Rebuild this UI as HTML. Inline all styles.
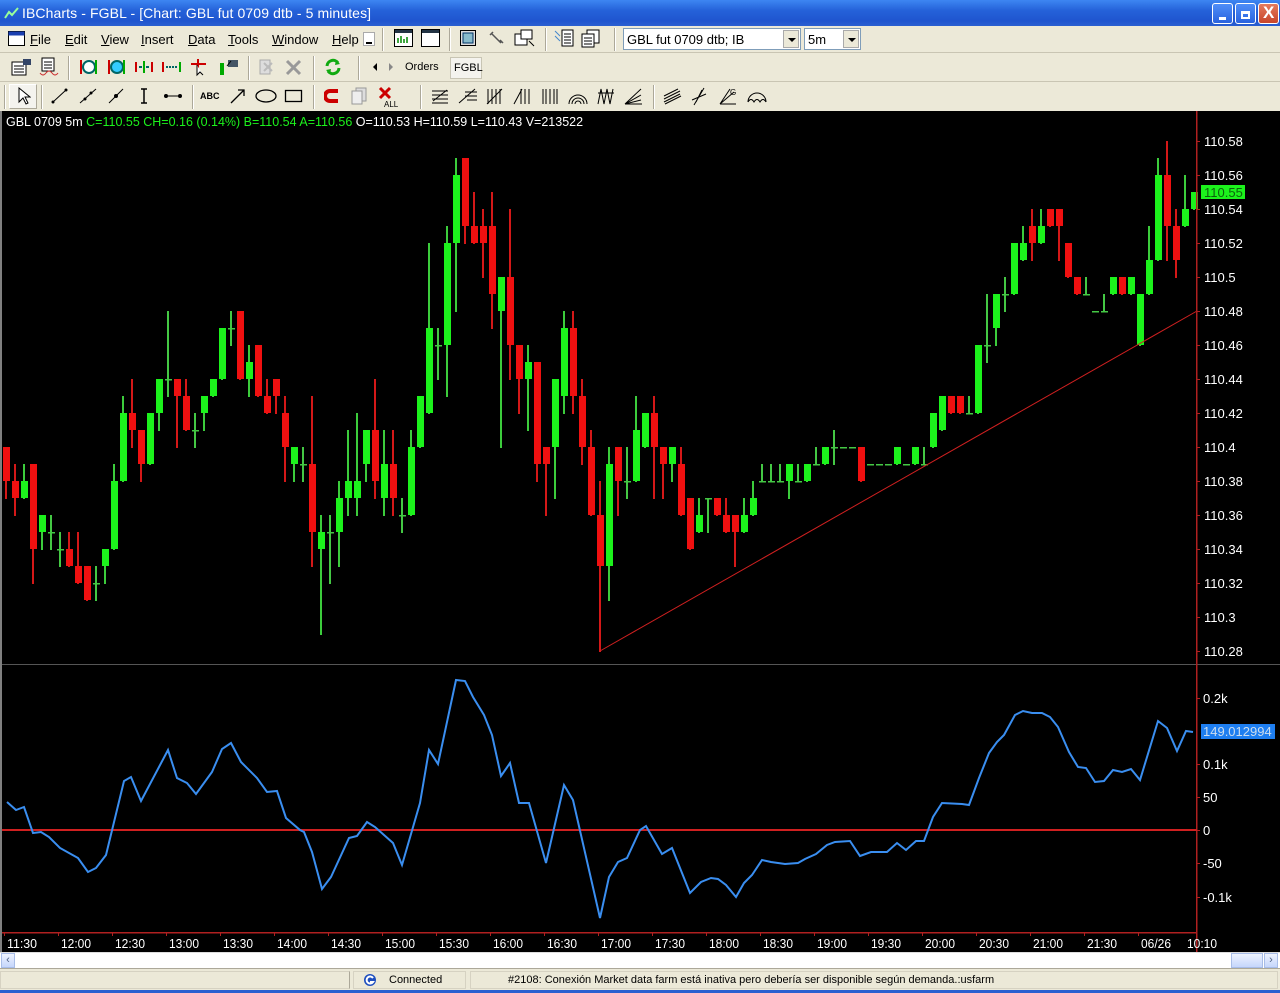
<!DOCTYPE html>
<html><head><meta charset="utf-8">
<style>
*{margin:0;padding:0;box-sizing:border-box}
body{width:1280px;height:993px;overflow:hidden;background:#ece9d8;font-family:"Liberation Sans",sans-serif;font-size:12px;position:relative}
.abs{position:absolute}
#title{left:0;top:0;width:1280px;height:26px;background:linear-gradient(#3d86f2,#2562d9 40%,#1f55cf 80%,#2a5fd0);}
#title span{position:absolute;left:22px;top:5px;color:#fff;font-size:14px;letter-spacing:0.1px}
.wb{position:absolute;top:3px;width:21px;height:21px;border:1px solid #fff;border-radius:3px;background:linear-gradient(#4f8ef8,#2a63de)}
.bar{left:0;width:1280px;background:#ece9d8;border-bottom:1px solid #c9c5b3}
.m{position:absolute;top:32px;font-size:13px;color:#000}
.m u{text-decoration:underline}
.sep{position:absolute;width:2px;border-left:1px solid #aca899;border-right:1px solid #fff}
.ic{position:absolute}
#chart{left:2px;top:111px;width:1278px;height:841px;background:#000}
</style></head><body>
<div id="title" class="abs">
<svg class="abs" style="left:4px;top:6px" width="16" height="14"><polyline points="1,12 5,6 8,9 14,2" fill="none" stroke="#9f9" stroke-width="2"/></svg>
<span>IBCharts - FGBL - [Chart: GBL fut 0709 dtb - 5 minutes]</span>
<div class="wb" style="left:1212px"><div class="abs" style="left:6px;top:13px;width:7px;height:3px;background:#fff"></div></div>
<div class="wb" style="left:1235px"><div class="abs" style="left:5px;top:7px;width:9px;height:8px;border:2px solid #fff;border-top-width:3px"></div></div>
<div class="wb" style="left:1258px;background:linear-gradient(#e47a5c,#c8452a)"><span style="position:absolute;left:4px;top:-1px;color:#fff;font-size:17px;font-weight:bold">X</span></div>
</div>

<div class="abs bar" style="top:26px;height:27px"></div>
<svg class="ic" style="left:8px;top:31px" width="17" height="16"><rect x="0.5" y="0.5" width="16" height="14" fill="#fff" stroke="#000"/><rect x="0.5" y="0.5" width="16" height="4" fill="#1a3fb0"/></svg>
<div class="m" style="left:30px"><u>F</u>ile</div>
<div class="m" style="left:65px"><u>E</u>dit</div>
<div class="m" style="left:101px"><u>V</u>iew</div>
<div class="m" style="left:141px"><u>I</u>nsert</div>
<div class="m" style="left:188px"><u>D</u>ata</div>
<div class="m" style="left:228px"><u>T</u>ools</div>
<div class="m" style="left:272px"><u>W</u>indow</div>
<div class="m" style="left:332px"><u>H</u>elp</div>
<div class="abs" style="left:363px;top:32px;width:12px;height:14px;border:1px solid #aaa;background:#fff"><div class="abs" style="left:2px;top:9px;width:6px;height:2px;background:#000"></div></div>
<div class="sep" style="left:382px;top:28px;height:23px"></div>
<svg class="ic" style="left:394px;top:29px" width="20" height="19"><rect x="0.5" y="0.5" width="18" height="17" fill="#fff" stroke="#000"/><rect x="1" y="1" width="17" height="3" fill="#234"/><path d="M4 14v-5M7 14v-7M10 14v-4M13 14v-6" stroke="#080" stroke-width="1.5"/></svg>
<svg class="ic" style="left:421px;top:29px" width="20" height="19"><rect x="0.5" y="0.5" width="18" height="17" fill="#fff" stroke="#000"/><rect x="1" y="1" width="17" height="3" fill="#234"/></svg>
<div class="sep" style="left:449px;top:28px;height:23px"></div>
<svg class="ic" style="left:460px;top:30px" width="17" height="17"><rect x="0.5" y="0.5" width="15" height="15" fill="#ddd" stroke="#000"/><rect x="3" y="3" width="10" height="10" fill="#8bc" stroke="#036"/></svg>
<svg class="ic" style="left:488px;top:30px" width="17" height="17"><path d="M3 3l10 10M5 2l-3 3M12 10l3 3" stroke="#555" stroke-width="1.5" fill="none"/></svg>
<svg class="ic" style="left:514px;top:29px" width="22" height="19"><rect x="1" y="5" width="12" height="11" fill="#fff" stroke="#000"/><rect x="7" y="1" width="11" height="9" fill="#fff" stroke="#000"/><path d="M15 12l5 5" stroke="#000"/></svg>
<div class="sep" style="left:545px;top:28px;height:23px"></div>
<svg class="ic" style="left:553px;top:29px" width="22" height="19"><path d="M2 2l5 5M2 7l5 5" stroke="#48c"/><rect x="9" y="1" width="11" height="16" fill="#fff" stroke="#000"/><path d="M11 5h7M11 8h7M11 11h7M11 14h7" stroke="#000"/></svg>
<svg class="ic" style="left:581px;top:29px" width="20" height="19"><rect x="6" y="1" width="12" height="13" fill="#fff" stroke="#000"/><rect x="1" y="5" width="12" height="13" fill="#fff" stroke="#000"/><path d="M3 9h8M3 12h8M3 15h8" stroke="#000"/></svg>
<div class="sep" style="left:614px;top:28px;height:23px"></div>
<div class="abs" style="left:623px;top:28px;width:178px;height:22px;background:#fff;border:1px solid #7f9db9"><span class="abs" style="left:3px;top:3px;font-size:13px">GBL fut 0709 dtb; IB</span>
<div class="abs" style="right:1px;top:1px;width:16px;height:18px;background:#ece9d8;border:1px solid #aaa"><div class="abs" style="left:4px;top:7px;border-left:4px solid transparent;border-right:4px solid transparent;border-top:4px solid #000"></div></div></div>
<div class="abs" style="left:804px;top:28px;width:57px;height:22px;background:#fff;border:1px solid #7f9db9"><span class="abs" style="left:3px;top:3px;font-size:13px">5m</span>
<div class="abs" style="right:1px;top:1px;width:16px;height:18px;background:#ece9d8;border:1px solid #aaa"><div class="abs" style="left:4px;top:7px;border-left:4px solid transparent;border-right:4px solid transparent;border-top:4px solid #000"></div></div></div>

<div class="abs bar" style="top:53px;height:29px"></div>
<svg class="ic" style="left:11px;top:57px" width="22" height="20"><rect x="1" y="5" width="14" height="13" fill="#fff" stroke="#000"/><path d="M3 9h10M3 12h10M3 15h10" stroke="#000"/><path d="M12 2h8v6h-8z" fill="#346"/></svg>
<svg class="ic" style="left:38px;top:57px" width="22" height="22"><rect x="4" y="1" width="12" height="13" fill="#fff" stroke="#000"/><path d="M6 5h8M6 8h8M6 11h8" stroke="#000"/><path d="M2 16q3 4 6 0t6 0 6 0" stroke="#c33" fill="none"/></svg>
<div class="sep" style="left:68px;top:56px;height:24px"></div>
<svg class="ic" style="left:78px;top:58px" width="20" height="18"><circle cx="11" cy="9" r="6" fill="#fff" stroke="#066" stroke-width="2"/><path d="M3 2v14" stroke="#c00" stroke-width="2"/><path d="M18 2v14" stroke="#0a0" stroke-width="2"/></svg>
<svg class="ic" style="left:106px;top:58px" width="20" height="18"><circle cx="11" cy="9" r="6" fill="#3cf" stroke="#066" stroke-width="2"/><path d="M3 2v14" stroke="#c00" stroke-width="2"/><path d="M18 2v14" stroke="#0a0" stroke-width="2"/></svg>
<svg class="ic" style="left:134px;top:58px" width="20" height="18"><path d="M2 4v10M18 4v10" stroke="#c00" stroke-width="2"/><path d="M5 9h3M12 9h3" stroke="#066" stroke-width="2"/><path d="M10 3v12" stroke="#0a0" stroke-width="2"/></svg>
<svg class="ic" style="left:161px;top:58px" width="22" height="18"><path d="M2 4v10" stroke="#c00" stroke-width="2"/><path d="M19 4v10" stroke="#0a0" stroke-width="2"/><path d="M5 9h12" stroke="#066" stroke-width="2" stroke-dasharray="2 1"/></svg>
<svg class="ic" style="left:189px;top:57px" width="20" height="20"><path d="M2 7h15M9 2v9" stroke="#c00" stroke-width="2"/><path d="M8 8l0 10 3-3 3 3" stroke="#000" fill="#fff"/></svg>
<svg class="ic" style="left:217px;top:57px" width="24" height="20"><path d="M5 6v12" stroke="#0a0" stroke-width="4"/><path d="M11 3h10v7h-10z" fill="#456"/><path d="M10 9l4-5" stroke="#000"/></svg>
<div class="sep" style="left:248px;top:56px;height:24px"></div>
<svg class="ic" style="left:256px;top:57px" width="20" height="20"><path d="M4 3h10v14h-10z" fill="#ddd" stroke="#aaa"/><path d="M8 6l8 8M16 6l-8 8" stroke="#bbb" stroke-width="2"/></svg>
<svg class="ic" style="left:285px;top:59px" width="18" height="18"><path d="M2 2l13 13M15 2l-13 13" stroke="#999" stroke-width="3"/></svg>
<div class="sep" style="left:313px;top:56px;height:24px"></div>
<svg class="ic" style="left:324px;top:58px" width="18" height="18"><path d="M3 8a6 6 0 0 1 11-3M15 10a6 6 0 0 1-11 3" stroke="#1a1" stroke-width="3" fill="none"/><path d="M12 2l4 4-5 1zM6 16l-4-4 5-1z" fill="#1a1"/></svg>
<div class="sep" style="left:358px;top:56px;height:24px"></div>
<div class="abs" style="left:373px;top:63px;border-top:4px solid transparent;border-bottom:4px solid transparent;border-right:4px solid #000"></div>
<div class="abs" style="left:389px;top:63px;border-top:4px solid transparent;border-bottom:4px solid transparent;border-left:4px solid #888"></div>
<div class="abs" style="left:405px;top:61px;font-size:11px">Orders</div>
<div class="abs" style="left:450px;top:57px;width:32px;height:22px;background:#f4f3ee;border:1px solid #c8c5b4"><span class="abs" style="left:3px;top:4px;font-size:11px">FGBL</span></div>

<div class="abs bar" style="top:82px;height:29px;border-bottom:none"></div>
<div class="sep" style="left:4px;top:85px;height:24px"></div>
<div class="abs" style="left:9px;top:84px;width:28px;height:25px;border:1px solid #fff;border-right-color:#aca899;border-bottom-color:#aca899;background:#f4f3ee"></div>
<svg class="ic" style="left:17px;top:87px" width="14" height="19"><path d="M2 1v14l4-4 3 6 2-1-3-6h5z" fill="#fff" stroke="#000"/></svg>
<div class="sep" style="left:41px;top:85px;height:24px"></div>
<svg class="ic" style="left:50px;top:87px" width="20" height="18"><path d="M3 15L16 3" stroke="#000"/><circle cx="3" cy="15" r="1.5" fill="#000"/><circle cx="16" cy="3" r="1.5" fill="#000"/></svg>
<svg class="ic" style="left:78px;top:87px" width="20" height="18"><path d="M2 16L18 2" stroke="#000"/><circle cx="7" cy="12" r="1.5" fill="#000"/><circle cx="13" cy="6" r="1.5" fill="#000"/></svg>
<svg class="ic" style="left:106px;top:87px" width="20" height="18"><path d="M3 16L17 2" stroke="#000"/><circle cx="10" cy="9" r="2" fill="#000"/></svg>
<svg class="ic" style="left:138px;top:87px" width="12" height="18"><path d="M6 2v14M3 2h6M3 16h6" stroke="#000" stroke-width="1.5"/></svg>
<svg class="ic" style="left:163px;top:90px" width="20" height="12"><path d="M2 6h16" stroke="#000"/><circle cx="3" cy="6" r="2" fill="#000"/><circle cx="17" cy="6" r="2" fill="#000"/></svg>
<div class="sep" style="left:192px;top:85px;height:24px"></div>
<div class="abs" style="left:200px;top:91px;font-size:9px;font-weight:bold">ABC</div>
<svg class="ic" style="left:229px;top:87px" width="18" height="18"><path d="M2 16L15 3M9 3h6v6" stroke="#000" fill="none" stroke-width="1.3"/></svg>
<svg class="ic" style="left:254px;top:88px" width="24" height="16"><ellipse cx="12" cy="8" rx="10" ry="6" fill="none" stroke="#000" stroke-width="1.3"/></svg>
<svg class="ic" style="left:284px;top:88px" width="20" height="16"><rect x="1.5" y="2.5" width="16" height="11" fill="none" stroke="#000" stroke-width="1.3"/></svg>
<div class="sep" style="left:313px;top:85px;height:24px"></div>
<svg class="ic" style="left:324px;top:88px" width="18" height="16"><path d="M14 3H6a5 5 0 0 0 0 10h8" stroke="#c00" stroke-width="4" fill="none"/></svg>
<svg class="ic" style="left:350px;top:86px" width="20" height="20"><rect x="6" y="2" width="10" height="13" fill="#ddd" stroke="#999"/><rect x="2" y="5" width="10" height="13" fill="#eee" stroke="#999"/></svg>
<svg class="ic" style="left:377px;top:86px" width="22" height="22"><path d="M3 2l10 10M13 2L3 12" stroke="#c00" stroke-width="3"/><text x="7" y="21" font-size="8" font-family="Liberation Sans">ALL</text></svg>
<div class="sep" style="left:420px;top:85px;height:24px"></div>
<svg class="ic" style="left:430px;top:87px" width="20" height="18"><path d="M2 4h16M2 8h16M2 12h16M2 16h16M3 14L17 3" stroke="#000"/></svg>
<svg class="ic" style="left:457px;top:87px" width="22" height="18"><path d="M2 16L18 2M8 5h12M8 9h12M10 13h10" stroke="#000"/></svg>
<svg class="ic" style="left:485px;top:87px" width="20" height="18"><path d="M3 2v15M7 2v15M11 2v15M15 2v15M2 17L17 2" stroke="#000"/></svg>
<svg class="ic" style="left:512px;top:87px" width="20" height="18"><path d="M9 2v15M13 2v15M17 2v15M2 17L10 2" stroke="#000"/></svg>
<svg class="ic" style="left:540px;top:87px" width="20" height="18"><path d="M3 2v15M6 2v15M10 2v15M14 2v15M17 2v15" stroke="#000"/></svg>
<svg class="ic" style="left:567px;top:87px" width="22" height="18"><path d="M2 17a9 9 0 0 1 18 0M5 17a6 6 0 0 1 12 0M8 17a3 3 0 0 1 6 0" stroke="#000" fill="none"/></svg>
<svg class="ic" style="left:596px;top:87px" width="20" height="18"><path d="M2 17L5 2 8 17 11 2 14 17 17 2M2 6h16" stroke="#000" fill="none"/></svg>
<svg class="ic" style="left:623px;top:87px" width="22" height="18"><path d="M2 17L18 2M2 17L18 8M2 17L18 13M2 17h17" stroke="#000" fill="none"/></svg>
<div class="sep" style="left:653px;top:85px;height:24px"></div>
<svg class="ic" style="left:662px;top:87px" width="22" height="18"><path d="M2 12L18 4M2 15L18 7M3 17L19 9M2 9L16 2" stroke="#000"/></svg>
<svg class="ic" style="left:690px;top:86px" width="20" height="20"><path d="M4 19L14 2M2 14l14-6M6 16L12 4" stroke="#000"/></svg>
<svg class="ic" style="left:718px;top:86px" width="22" height="20"><path d="M2 18L16 6M2 18L12 3M2 18h16" stroke="#000"/><text x="12" y="9" font-size="8" font-family="Liberation Sans">G</text></svg>
<svg class="ic" style="left:746px;top:87px" width="22" height="18"><path d="M2 15a9 9 0 0 1 18 0" stroke="#000" fill="none"/><path d="M2 15q3-5 6 0q3-5 6 0q3-5 6 0" stroke="#000" fill="none"/></svg>

<div id="chart" class="abs"></div>
<div class="abs" style="left:0;top:111px;width:2px;height:841px;background:#808080"></div>

<div class="abs" style="left:0;top:952px;width:1280px;height:16px;background:#fff;border-top:1px solid #ddd"></div>
<div class="abs" style="left:1px;top:953px;width:14px;height:15px;background:linear-gradient(#eef3fe,#c5d6fc);border:1px solid #a8bde8;color:#4d6185;font-size:11px;text-align:center;line-height:12px">‹</div>
<div class="abs" style="left:1231px;top:953px;width:32px;height:15px;background:linear-gradient(#eef3fe,#c5d6fc);border:1px solid #a8bde8"></div>
<div class="abs" style="left:1264px;top:953px;width:14px;height:15px;background:linear-gradient(#eef3fe,#c5d6fc);border:1px solid #a8bde8;color:#4d6185;font-size:11px;text-align:center;line-height:12px">›</div>

<div class="abs" style="left:0;top:968px;width:1280px;height:22px;background:#ece9d8;border-top:1px solid #aca899"></div>
<div class="abs" style="left:0;top:971px;width:350px;height:18px;border:1px solid #d6d2c2;border-right-color:#aca899"></div>
<div class="abs" style="left:353px;top:971px;width:113px;height:18px;border:1px solid #d6d2c2"></div>
<div class="abs" style="left:470px;top:971px;width:808px;height:18px;border:1px solid #d6d2c2"></div>
<svg class="ic" style="left:363px;top:973px" width="14" height="14"><circle cx="7" cy="7" r="6" fill="#1f4fbf"/><path d="M10 5a3.5 3.5 0 1 0 0 4H7" stroke="#fff" stroke-width="2" fill="none"/></svg>
<div class="abs" style="left:389px;top:974px;font-size:11px">Connected</div>
<div class="abs" style="left:508px;top:974px;font-size:11px">#2108: Conexión Market data farm está inativa pero debería ser disponible según demanda.:usfarm</div>
<div class="abs" style="left:0;top:990px;width:1280px;height:3px;background:#2a5fd0"></div>

<script>
var D=[[12,10,12,9],[10,9,11,8],[9,10,11,9],[11,6,11,4],[7,8,8,6],[7,7,8,6],[6,6,7,5],[6,5,7,5],[5,4,7,4],[5,3,5,3],[4,4,5,3],[5,6,6,4],[6,10,11,6],[10,14,15,10],[14,13,16,12],[13,11,13,10],[11,14,14,11],[14,16,16,13],[16,16,20,15],[16,15,16,12],[15,13,16,13],[13,13,14,12],[14,15,15,13],[15,16,16,15],[16,19,19,16],[19,19,20,18],[20,16,20,16],[16,17,18,15],[18,15,18,15],[15,14,16,14],[16,15,16,14],[14,12,15,10],[11,12,12,10],[11,11,12,10],
[11,7,15,5],[6,7,8,1],[7,7,8,4],[7,9,10,5],[9,10,13,8],[9,10,14,8],[11,13,13,10],[13,10,16,9],[9,11,13,8],[11,9,13,8],[8,8,9,7],[8,12,13,8],[12,15,15,12],[14,19,24,14],[18,18,19,16],[18,24,25,15],[24,28,29,20],[29,25,29,24],[25,24,27,24],[25,24,26,22],[25,21,27,19],[20,22,22,12],[22,18,26,16],[18,16,18,14],[16,17,18,13],[17,11,17,10],[12,11,12,8],[12,16,16,9],[15,19,20,14],[19,15,20,14],[15,12,16,11],[12,8,13,8],[8,5,10,0],
[5,11,12,3],[12,10,12,8],[10,10,12,9],[10,13,15,10],[12,14,14,12],[14,12,15,9],[12,11,12,9],[11,12,12,10],[11,8,12,8],[9,6,9,6],[7,8,9,7],[9,9,9,7],[9,8,9,8],[8,7,9,7],[8,7,8,5],[7,8,9,7],[8,9,10,8],[10,10,11,10],[10,10,11,10],[10,10,11,10],[10,11,11,9],[10,10,11,10],[10,11,11,10],[11,11,12,11],[11,12,12,11],[12,12,13,11],[12,12,12,12],[12,12,12,12],[12,10,12,10],[11,11,11,11],[11,11,11,11],[11,11,11,11],[11,12,12,11],[11,11,11,11],
[11,12,12,11],[11,11,12,11],[12,14,14,12],[13,15,15,13],[15,14,15,14],[15,14,15,14],[14,14,15,14],[14,18,18,14],[18,18,21,17],[19,21,21,18],[21,21,22,20],[21,24,24,21],[23,24,25,23],[25,24,26,23],[24,25,26,24],[26,25,26,25],[26,25,26,23],[24,22,24,22],[22,21,22,21],[21,21,22,21],[20,20,20,20],[20,20,21,20],[21,22,22,21],[22,21,22,21],[21,22,22,21],[18,21,21,18],[21,23,25,21],[23,28,29,23],[28,25,30,23],[25,23,26,22],[25,26,28,25],[26,27,27,26]];
var s='<svg width="1280" height="993" xmlns="http://www.w3.org/2000/svg" style="position:absolute;left:0;top:0" font-family="Liberation Sans, sans-serif">';
function Y(k){return 651-k*17}
for(var i=0;i<D.length;i++){var d=D[i],x=6+9*i,o=d[0],c=d[1],h=d[2],l=d[3];var up=c>=o;var col=(c>o)?'#1cf21c':(c<o?'#f01010':'#33d633');var wc=(c>o)?'#3ccc3c':(c<o?'#d41818':'#44c844');
if(h>l)s+='<rect x="'+(x-1)+'" y="'+Y(h)+'" width="2" height="'+((h-l)*17+1)+'" fill="'+wc+'"/>';
var t=Math.max(o,c),b=Math.min(o,c);
if(t>b)s+='<rect x="'+(x-3)+'" y="'+Y(t)+'" width="7" height="'+((t-b)*17)+'" fill="'+col+'"/>';
else s+='<rect x="'+(x-3)+'" y="'+Y(t)+'" width="7" height="1.5" fill="'+wc+'"/>';}
s+='<line x1="600" y1="651" x2="1197" y2="311" stroke="#d02020" stroke-width="1"/>';
s+='<rect x="2" y="664" width="1278" height="1" fill="#555"/>';
s+='<rect x="1196" y="111" width="1.5" height="841" fill="#b02020"/>';
var P=['110.58','110.56','110.54','110.52','110.5','110.48','110.46','110.44','110.42','110.4','110.38','110.36','110.34','110.32','110.3','110.28'];
for(var j=0;j<P.length;j++){var y=141+j*34;s+='<rect x="1197" y="'+y+'" width="3" height="1" fill="#b02020"/><text x="1204" y="'+(y+5)+'" fill="#fff" font-size="13">'+P[j]+'</text>';}
s+='<rect x="1201" y="185" width="44" height="14" fill="#1cf21c"/><text x="1204" y="197" fill="#000" font-size="13" opacity="0.6">110.55</text>';
s+='<text x="6" y="126" font-size="12.5" fill="#fff">GBL 0709 5m <tspan fill="#1cf21c">C=110.55  CH=0.16 (0.14%)  B=110.54  A=110.56</tspan>  O=110.53  H=110.59  L=110.43  V=213522</text>';
s+='<rect x="2" y="829" width="1195" height="2" fill="#d02020"/>';
var L=[[7,802],[16,810],[24,807],[33,833],[41,832],[49,837],[60,848],[78,858],[88,872],[96,868],[106,855],[124,781],[131,777],[141,801],[168,750],[177,778],[187,783],[196,794],[212,772],[222,749],[231,743],[241,762],[257,778],[267,792],[277,791],[286,818],[300,830],[304,832],[312,852],[322,889],[331,877],[349,838],[357,836],[367,822],[375,827],[384,835],[393,843],[402,865],[420,803],[429,750],[438,764],[456,680],[465,681],[473,697],[484,715],[492,735],[501,776],[510,763],[519,803],[529,803],[546,863],[564,785],[573,800],[600,918],[609,877],[618,862],[627,858],[640,830],[646,826],[662,854],[672,848],[690,893],[701,882],[711,878],[718,879],[726,885],[736,897],[744,883],[752,875],[762,860],[771,862],[785,864],[798,863],[805,859],[816,854],[827,845],[835,842],[850,841],[860,856],[871,852],[887,852],[897,843],[906,850],[916,841],[924,841],[933,817],[942,803],[962,804],[969,805],[979,778],[989,753],[997,742],[1004,735],[1015,715],[1023,711],[1032,713],[1042,713],[1050,717],[1058,727],[1069,752],[1078,767],[1086,768],[1095,782],[1104,781],[1113,770],[1122,772],[1131,769],[1140,780],[1158,721],[1167,728],[1177,751],[1186,731],[1193,732]];
s+='<polyline fill="none" stroke="#3a8ef0" stroke-width="2" points="'+L.map(function(p){return p.join(',')}).join(' ')+'"/>';
var I=[['0.2k',698],['0.1k',764],['50',797],['0',830],['-50',863],['-0.1k',897]];
for(var j=0;j<I.length;j++){s+='<rect x="1197" y="'+I[j][1]+'" width="3" height="1" fill="#b02020"/><text x="1203" y="'+(I[j][1]+5)+'" fill="#fff" font-size="13">'+I[j][0]+'</text>';}
s+='<rect x="1201" y="724" width="74" height="15" fill="#1e7ef0"/><text x="1203" y="736" fill="#cde" font-size="13">149.012994</text>';
s+='<rect x="2" y="932" width="1195" height="1.5" fill="#b02020"/>';
var T=['11:30','12:00','12:30','13:00','13:30','14:00','14:30','15:00','15:30','16:00','16:30','17:00','17:30','18:00','18:30','19:00','19:30','20:00','20:30','21:00','21:30','06/26'];
for(var j=0;j<T.length;j++){var x=4+54*j;s+='<rect x="'+x+'" y="933" width="1" height="3" fill="#b02020"/><text x="'+(x+3)+'" y="948" fill="#fff" font-size="13" textLength="30" lengthAdjust="spacingAndGlyphs">'+T[j]+'</text>';}
s+='<text x="1187" y="948" fill="#fff" font-size="13" textLength="30" lengthAdjust="spacingAndGlyphs">10:10</text>';
s+='</svg>';
document.getElementById('chart').insertAdjacentHTML('beforebegin',s);
var sv=document.querySelector('svg[width="1280"]');document.body.appendChild(sv);
</script>
</body></html>
